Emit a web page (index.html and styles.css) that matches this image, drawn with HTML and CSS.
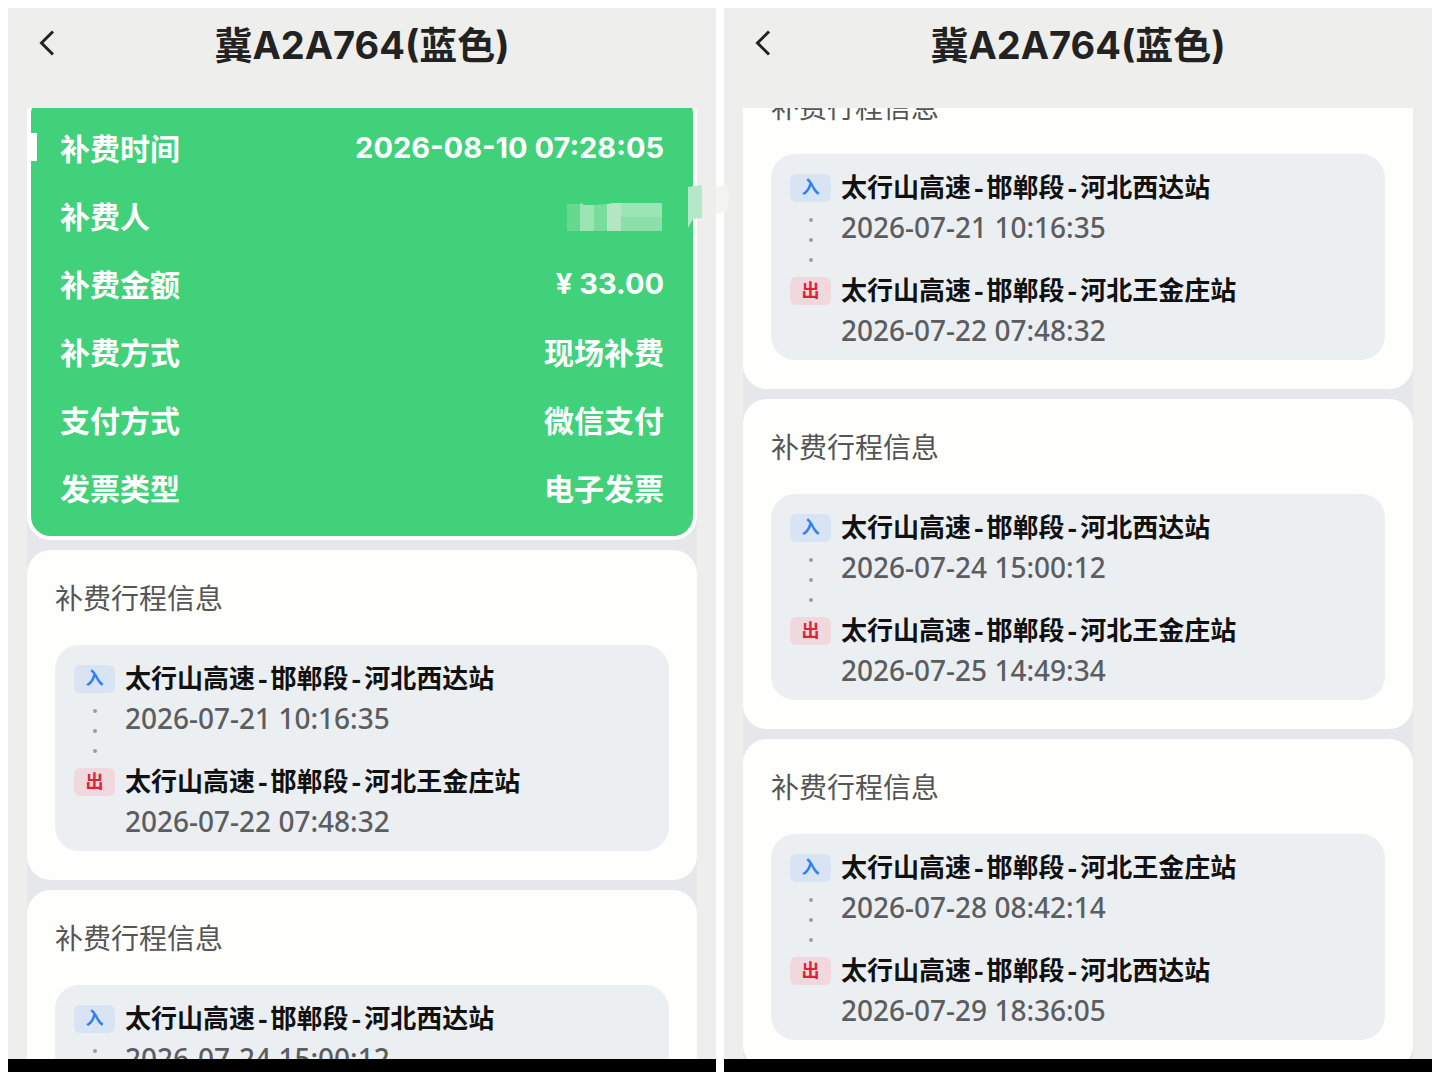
FILE: index.html
```html
<!DOCTYPE html>
<html lang="zh-CN">
<head>
  <meta charset="UTF-8" />
  <meta name="viewport" content="width=device-width, initial-scale=1" />
  <title>冀A2A764(蓝色)</title>
  <link rel="stylesheet" href="styles.css">
</head>
<body>

<section class="pantalla">
  <header>
    <button class="back" aria-label="返回">
      <svg width="16" height="26" viewBox="0 0 16 26"><path d="M14 1.5L2.5 13L14 24.5" /></svg>
    </button>
    <h1>冀A2A764(蓝色)</h1>
  </header>

  <main>
    <div class="list">
      <div class="pay-card">
        <dl>
          <div class="row"><dt>补费时间</dt><dd class="num">2026-08-10 07:28:05</dd></div>
          <div class="row">
            <dt>补费人</dt>
            <dd>
              <svg class="mosaic" width="96" height="28" viewBox="0 0 96 28">
                <path fill="#66d88f" d="M1 1h14v27H1z" />
                <path fill="#9be4b4" d="M14 1l2-1 2 2 10 0v26H14z" />
                <path fill="#78dc9c" d="M28 2l13-1v27H28z" />
                <path fill="#b4e6c6" d="M41 1l6-1h8v28H41z" />
                <path fill="#9ae4b5" d="M55 0h41v14H55z" />
                <path fill="#8be0aa" d="M55 14h41v14H55z" />
              </svg>
            </dd>
          </div>
          <div class="row"><dt>补费金额</dt><dd class="num">¥ 33.00</dd></div>
          <div class="row"><dt>补费方式</dt><dd>现场补费</dd></div>
          <div class="row"><dt>支付方式</dt><dd>微信支付</dd></div>
          <div class="row"><dt>发票类型</dt><dd>电子发票</dd></div>
        </dl>
        <span class="notch"></span>
        <svg class="smudge" width="42" height="46" viewBox="0 0 42 46">
          <path fill="#b5e8c8" d="M0 3L14 1V34L5 35L0 44z" />
          <path fill="#f4f4f3" d="M28 4L37 0L41 10L39 27L28 30z" />
        </svg>
      </div>

      <article class="card">
        <h2>补费行程信息</h2>
        <div class="trip">
          <div class="stop">
            <div class="rail"><span class="tag in">入</span><i></i><i></i><i></i></div>
            <div class="info"><strong>太行山高速-邯郸段-河北西达站</strong><time>2026-07-21 10:16:35</time></div>
          </div>
          <div class="stop">
            <div class="rail"><span class="tag out">出</span></div>
            <div class="info"><strong>太行山高速-邯郸段-河北王金庄站</strong><time>2026-07-22 07:48:32</time></div>
          </div>
        </div>
      </article>

      <article class="card">
        <h2>补费行程信息</h2>
        <div class="trip">
          <div class="stop">
            <div class="rail"><span class="tag in">入</span><i></i><i></i><i></i></div>
            <div class="info"><strong>太行山高速-邯郸段-河北西达站</strong><time>2026-07-24 15:00:12</time></div>
          </div>
        </div>
      </article>
    </div>
  </main>

  <footer></footer>
</section>

<section class="pantalla">
  <header>
    <button class="back" aria-label="返回">
      <svg width="16" height="26" viewBox="0 0 16 26"><path d="M14 1.5L2.5 13L14 24.5" /></svg>
    </button>
    <h1>冀A2A764(蓝色)</h1>
  </header>

  <main>
    <div class="list scrolled">
      <article class="card">
        <h2>补费行程信息</h2>
        <div class="trip">
          <div class="stop">
            <div class="rail"><span class="tag in">入</span><i></i><i></i><i></i></div>
            <div class="info"><strong>太行山高速-邯郸段-河北西达站</strong><time>2026-07-21 10:16:35</time></div>
          </div>
          <div class="stop">
            <div class="rail"><span class="tag out">出</span></div>
            <div class="info"><strong>太行山高速-邯郸段-河北王金庄站</strong><time>2026-07-22 07:48:32</time></div>
          </div>
        </div>
      </article>

      <article class="card">
        <h2>补费行程信息</h2>
        <div class="trip">
          <div class="stop">
            <div class="rail"><span class="tag in">入</span><i></i><i></i><i></i></div>
            <div class="info"><strong>太行山高速-邯郸段-河北西达站</strong><time>2026-07-24 15:00:12</time></div>
          </div>
          <div class="stop">
            <div class="rail"><span class="tag out">出</span></div>
            <div class="info"><strong>太行山高速-邯郸段-河北王金庄站</strong><time>2026-07-25 14:49:34</time></div>
          </div>
        </div>
      </article>

      <article class="card">
        <h2>补费行程信息</h2>
        <div class="trip">
          <div class="stop">
            <div class="rail"><span class="tag in">入</span><i></i><i></i><i></i></div>
            <div class="info"><strong>太行山高速-邯郸段-河北王金庄站</strong><time>2026-07-28 08:42:14</time></div>
          </div>
          <div class="stop">
            <div class="rail"><span class="tag out">出</span></div>
            <div class="info"><strong>太行山高速-邯郸段-河北西达站</strong><time>2026-07-29 18:36:05</time></div>
          </div>
        </div>
      </article>
    </div>
  </main>

  <footer></footer>
</section>

</body>
</html>
```
FILE: styles.css
```css
* {
  box-sizing: border-box;
}

body {
  margin: 0;
  padding: 8px;
  height: 100vh;
  display: grid;
  grid-template-columns: 1fr 1fr;
  gap: 8px;
  background-color: #fff;
  font-family: Inter, "Noto Sans CJK SC", sans-serif;
}

.pantalla {
  min-width: 0;
  min-height: 0;
  display: flex;
  flex-direction: column;
  background-color: #eeeeed;
}

header {
  flex: none;
  height: 100px;
  display: grid;
  grid-template-columns: 60px 1fr 60px;
  padding-bottom: 26px;
}

.back {
  display: flex;
  align-items: center;
  justify-content: flex-end;
  padding: 0 13px 4px 0;
  border: none;
  background: none;
  cursor: pointer;
}

.back path {
  fill: none;
  stroke: #222;
  stroke-width: 3;
}

h1 {
  margin: 0;
  font-size: 38px;
  line-height: 74px;
  font-weight: 700;
  text-align: center;
  color: #222;
}

main {
  flex: 1;
  min-height: 0;
  overflow-x: visible;
  overflow-y: clip;
  padding: 0 19px;
}

.list {
  display: flex;
  flex-direction: column;
  gap: 10px;
  background-color: #e5e7eb;
}

.scrolled {
  margin-top: -49px;
}

.pay-card {
  position: relative;
  margin-top: -18px;
  border: 4px solid #fff;
  border-radius: 24px;
  background-color: #41d17a;
  color: #fff;
}

.pay-card dl {
  margin: 0;
  padding: 19px 29px 15px;
}

.row {
  display: flex;
  justify-content: space-between;
  align-items: center;
  height: 68px;
  font-size: 30px;
  font-weight: 700;
}

.row dd {
  margin: 0;
}

.row .num {
  font-size: 29px;
}

.mosaic {
  display: block;
  margin: 4px 2px 0 0;
}

.notch {
  position: absolute;
  left: 0;
  top: 39px;
  width: 6px;
  height: 28px;
  background-color: #fff;
}

.smudge {
  position: absolute;
  right: -37px;
  top: 90px;
}

.card {
  padding: 0 28px 29px;
  border-radius: 24px;
  background-color: #fefefd;
}

.card h2 {
  margin: 0;
  padding-top: 3px;
  font-size: 28px;
  line-height: 92px;
  font-weight: 400;
  color: #555;
}

.trip {
  display: flex;
  flex-direction: column;
  gap: 23px;
  padding: 14px 19px 9px;
  border-radius: 24px;
  background-color: #ebeff2;
}

.stop {
  display: flex;
  gap: 10px;
  height: 80px;
}

.rail {
  display: flex;
  flex-direction: column;
  align-items: center;
  gap: 16px;
  padding-top: 6px;
}

.rail i {
  flex: none;
  width: 4px;
  height: 4px;
  border-radius: 50%;
  background-color: #999da1;
}

.tag {
  flex: none;
  width: 41px;
  border-radius: 6px;
  font-size: 18px;
  line-height: 28px;
  font-weight: 700;
  text-align: center;
}

.in {
  background-color: #d8e4f4;
  color: #2f80ed;
}

.out {
  background-color: #f0d8de;
  color: #dc2438;
}

.info {
  display: flex;
  flex-direction: column;
  white-space: nowrap;
}

.info strong {
  font-family: "Liberation Mono", "Noto Sans CJK SC", monospace;
  font-size: 26px;
  line-height: 44px;
  font-weight: 700;
  color: #111;
}

.info time {
  font-family: "Noto Sans", sans-serif;
  font-size: 28px;
  line-height: 30px;
  font-weight: 500;
  color: #5c5d5f;
}

footer {
  flex: none;
  height: 13px;
  background-color: #000;
}
```
